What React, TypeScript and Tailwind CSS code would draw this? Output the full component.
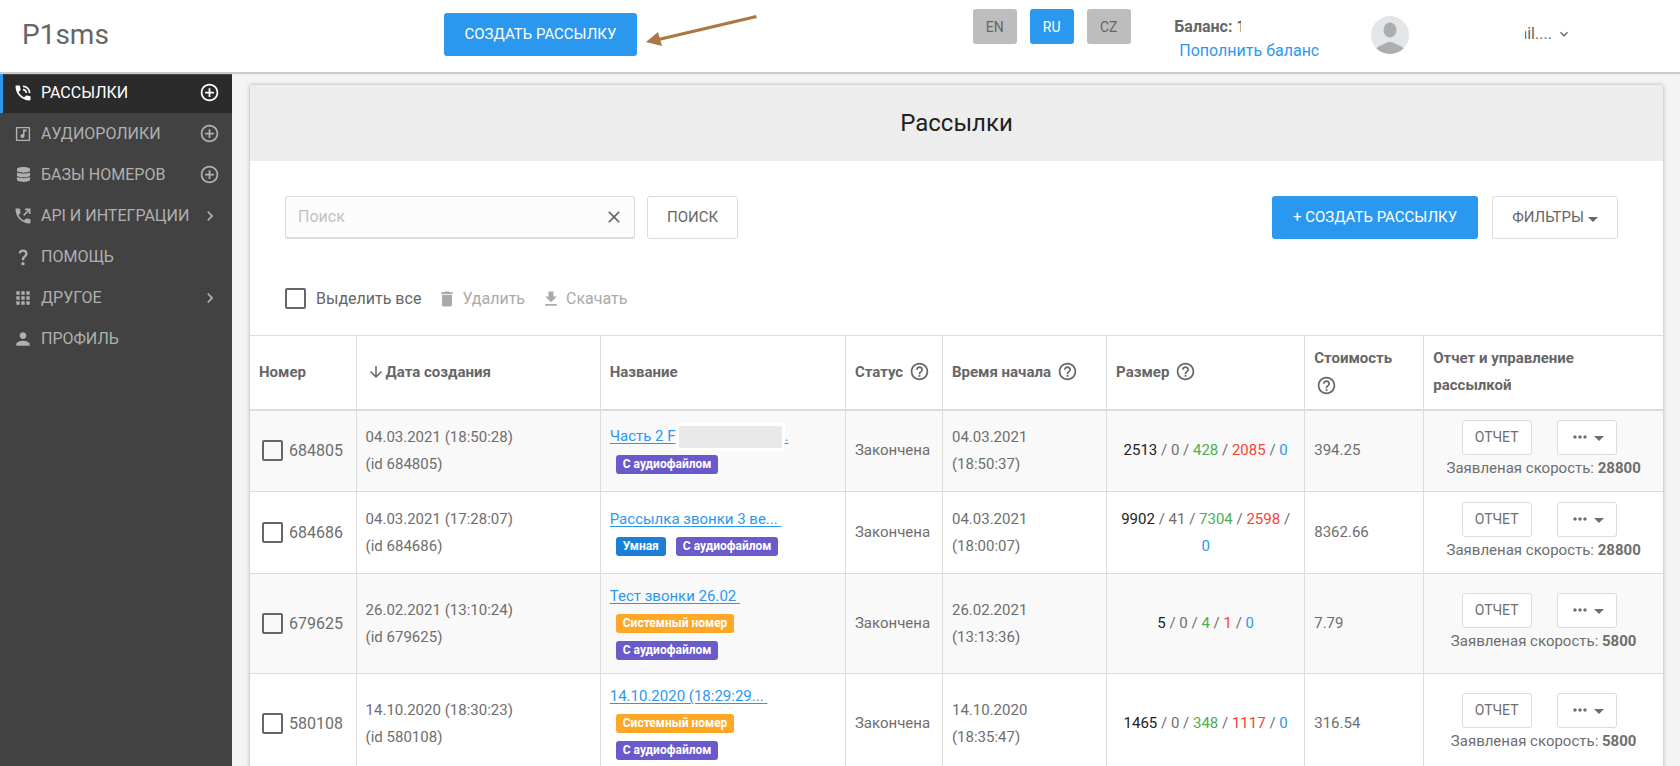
import { ReactNode } from "react"
import { FaDatabase } from "react-icons/fa"
import {
  MdAddCircleOutline,
  MdApps,
  MdArrowDownward,
  MdChevronRight,
  MdClose,
  MdDelete,
  MdExpandMore,
  MdFileDownload,
  MdHelpOutline,
  MdMoreHoriz,
  MdPerson,
  MdPhoneInTalk,
  MdQuestionMark,
} from "react-icons/md"

type Tag = "smart" | "audio" | "system"

type Mailing = {
  id: string
  created: string
  createdTime: string
  name: string
  hidden?: boolean
  tags: Tag[]
  start: string
  startTime: string
  size: string[]
  price: string
  speed: string
}

const tagInfo = {
  smart: { label: "Умная", color: "bg-[#1c7fd6]" },
  audio: { label: "С аудиофайлом", color: "bg-[#6a5bcb]" },
  system: { label: "Системный номер", color: "bg-[#ffa726]" },
}

const mailings: Mailing[] = [
  {
    id: "684805",
    created: "04.03.2021",
    createdTime: "18:50:28",
    name: "Часть 2 F",
    hidden: true,
    tags: ["audio"],
    start: "04.03.2021",
    startTime: "18:50:37",
    size: ["2513", "0", "428", "2085", "0"],
    price: "394.25",
    speed: "28800",
  },
  {
    id: "684686",
    created: "04.03.2021",
    createdTime: "17:28:07",
    name: "Рассылка звонки 3 ве...",
    tags: ["smart", "audio"],
    start: "04.03.2021",
    startTime: "18:00:07",
    size: ["9902", "41", "7304", "2598", "0"],
    price: "8362.66",
    speed: "28800",
  },
  {
    id: "679625",
    created: "26.02.2021",
    createdTime: "13:10:24",
    name: "Тест звонки 26.02",
    tags: ["system", "audio"],
    start: "26.02.2021",
    startTime: "13:13:36",
    size: ["5", "0", "4", "1", "0"],
    price: "7.79",
    speed: "5800",
  },
  {
    id: "580108",
    created: "14.10.2020",
    createdTime: "18:30:23",
    name: "14.10.2020 (18:29:29...",
    tags: ["system", "audio"],
    start: "14.10.2020",
    startTime: "18:35:47",
    size: ["1465", "0", "348", "1117", "0"],
    price: "316.54",
    speed: "5800",
  },
]

const sizeColors = ["text-[#212121]", "", "text-[#4caf50]", "text-[#f44336]", "text-[#2b98f0]"]

function MusicIcon() {
  return (
    <svg viewBox="0 0 18 18" className="size-4" fill="currentColor">
      <path d="M2 1h14a1 1 0 0 1 1 1v14a1 1 0 0 1-1 1H2a1 1 0 0 1-1-1V2a1 1 0 0 1 1-1zm.6 1.600v12.800h12.800V2.600z" fillRule="evenodd" />
      <path d="M9 4h4v2.300h-2.300v5a2.300 2.300 0 1 1-1.700-2.200z" />
    </svg>
  )
}

function CallOutIcon() {
  return (
    <svg viewBox="0 0 24 24" className="size-5" fill="currentColor">
      <path d="M20 15.500c-1.250 0-2.450-.2-3.570-.57-.35-.11-.74-.03-1.020.24l-2.200 2.200c-2.830-1.440-5.150-3.750-6.590-6.580l2.200-2.210c.28-.27.36-.66.25-1.010C8.700 6.450 8.500 5.250 8.500 4c0-.55-.45-1-1-1H4c-.55 0-1 .45-1 1 0 9.390 7.610 17 17 17 .55 0 1-.45 1-1v-3.500c0-.55-.45-1-1-1z" />
      <path d="M14.500 3H21v6.500h-2V6.400l-5.600 5.600L12 10.600 17.600 5h-3.100z" />
    </svg>
  )
}

function Caret() {
  return (
    <svg viewBox="0 0 10 5" className="mt-[3px] h-[5px] w-[10px]" fill="currentColor">
      <path d="M0 0h10L5 5z" />
    </svg>
  )
}

type NavItem = { label: string; icon: ReactNode; end?: "add" | "more"; active?: boolean }

const nav: NavItem[] = [
  { label: "РАССЫЛКИ", icon: <MdPhoneInTalk className="size-5" />, end: "add", active: true },
  { label: "АУДИОРОЛИКИ", icon: <MusicIcon />, end: "add" },
  { label: "БАЗЫ НОМЕРОВ", icon: <FaDatabase className="size-[15px]" />, end: "add" },
  { label: "API И ИНТЕГРАЦИИ", icon: <CallOutIcon />, end: "more" },
  { label: "ПОМОЩЬ", icon: <MdQuestionMark className="size-5" /> },
  { label: "ДРУГОЕ", icon: <MdApps className="size-5" />, end: "more" },
  { label: "ПРОФИЛЬ", icon: <MdPerson className="size-5" /> },
]

function Sidebar() {
  return (
    <nav className="w-58 shrink-0 bg-[#424242] text-base">
      {nav.map((item) => (
        <div
          key={item.label}
          className={
            item.active
              ? "flex h-[41px] items-center border-l-3 border-[#2b98f0] bg-[#2b2b2b] pr-3 pl-[10px] text-white"
              : "flex h-[41px] items-center border-l-3 border-transparent pr-3 pl-[10px] text-[#b0b0b0]"
          }
        >
          <a href="#" className="flex flex-1 items-center gap-2 whitespace-nowrap">
            <span className="flex w-5 justify-center">{item.icon}</span>
            {item.label}
          </a>
          {item.end === "add" && (
            <button type="button" aria-label="Добавить">
              <MdAddCircleOutline className="size-[21px]" />
            </button>
          )}
          {item.end === "more" && <MdChevronRight className="size-5" />}
        </div>
      ))}
    </nav>
  )
}

function Header() {
  return (
    <header className="z-10 flex h-[72px] shrink-0 bg-white shadow-[0_1px_1px_1px_#cacaca]">
      <div className="w-[26.4%] pt-[17px] pl-[22px] text-[28px] leading-9">P1sms</div>

      <div className="flex w-[31.500%] items-start pt-[13px]">
        <button type="button" className="h-[43px] rounded-[3px] bg-[#2b98f0] px-[21px] text-white">
          СОЗДАТЬ РАССЫЛКУ
        </button>
        <svg viewBox="0 0 112 34" className="ml-[9px] h-[34px] w-28" fill="#a97a46">
          <path d="M110 2l1 3-98 23-1-3z" />
          <path d="M0 29l12-10 4 14z" />
        </svg>
      </div>

      <div className="flex w-[12%] gap-[13px] pt-[9px]">
        <button type="button" className="h-[35px] w-11 rounded-[3px] bg-[#bdbdbd] text-sm">EN</button>
        <button type="button" className="h-[35px] w-11 rounded-[3px] bg-[#2b98f0] text-sm text-white">RU</button>
        <button type="button" className="h-[35px] w-11 rounded-[3px] bg-[#bdbdbd] text-sm">CZ</button>
      </div>

      <div className="w-[11.700%] pt-[15px] text-base leading-6">
        <div className="flex font-bold whitespace-pre">
          Баланс: <span className="w-[5px] overflow-hidden">1</span>
        </div>
        <a href="#" className="ml-[5px] text-[#2b98f0]">Пополнить баланс</a>
      </div>

      <svg viewBox="0 0 38 38" className="mt-4 size-[38px]">
        <clipPath id="avatar">
          <circle cx="19" cy="19" r="19" />
        </clipPath>
        <g clipPath="url(#avatar)">
          <rect width="38" height="38" fill="#e3e5e7" />
          <ellipse cx="19" cy="14" rx="6.500" ry="7.500" fill="#abaeb1" />
          <path d="M5 33c2-3 7-4 9-5.500 3-2 7-2 10 0 2 1.500 7 2.500 9 5.500v6H5z" fill="#abaeb1" />
        </g>
      </svg>

      <button type="button" className="ml-29 flex h-9 items-center self-start pt-8">
        <span className="flex w-[27px] justify-end overflow-hidden text-base">ail....</span>
        <MdExpandMore className="ml-1 size-4" />
      </button>
    </header>
  )
}

function Toolbar() {
  return (
    <div className="px-[35px] pt-[35px]">
      <div className="flex items-center pr-[10px]">
        <div className="flex h-[43px] w-[350px] items-center rounded-[3px] border border-b-2 border-[#dcdcdc] bg-[#fcfcfc]">
          <input
            type="text"
            aria-label="Поиск"
            placeholder="Поиск"
            className="min-w-0 flex-1 pl-3 text-base outline-none placeholder:text-[#c2c2c2]"
          />
          <button type="button" aria-label="Очистить" className="mr-[10px]">
            <MdClose className="size-5" />
          </button>
        </div>
        <button type="button" className="ml-3 h-[43px] rounded-[3px] border border-[#dcdcdc] px-[19px]">
          ПОИСК
        </button>
        <button type="button" className="ml-auto h-[43px] rounded-[3px] bg-[#2b98f0] px-[21px] text-white">
          + СОЗДАТЬ РАССЫЛКУ
        </button>
        <button type="button" className="ml-[14px] flex h-[43px] items-center gap-1 rounded-[3px] border border-[#dcdcdc] px-[19px]">
          ФИЛЬТРЫ <Caret />
        </button>
      </div>

      <div className="mt-8 flex h-[64px] items-center pb-[9px] text-base">
        <label className="flex items-center gap-[10px]">
          <input type="checkbox" className="size-[21px] appearance-none rounded-[2px] border-2 border-[#666]" />
          Выделить все
        </label>
        <button type="button" className="ml-4 flex items-center gap-[5px] text-[#aaa]">
          <MdDelete className="size-5" /> Удалить
        </button>
        <button type="button" className="ml-4 flex items-center gap-[5px] text-[#aaa]">
          <MdFileDownload className="size-5" /> Скачать
        </button>
      </div>
    </div>
  )
}

function Help() {
  return <MdHelpOutline className="mb-[2px] ml-[2px] inline size-[21px]" />
}

function Row({ item }: { item: Mailing }) {
  return (
    <tr className="h-[82px] border-t border-[#dcdcdc] text-[#6e6e6e] odd:bg-[#f9f9f9]">
      <td className="pl-3">
        <label className="flex items-center gap-[6px] text-base">
          <input type="checkbox" className="size-[21px] appearance-none rounded-[2px] border-2 border-[#666]" />
          {item.id}
        </label>
      </td>
      <td className="border-l border-[#dcdcdc] px-[9px]">
        {item.created} ({item.createdTime})
        <br />
        (id {item.id})
      </td>
      <td className="border-l border-[#dcdcdc] px-[9px] py-[9px]">
        <div className="flex h-[27px] items-center whitespace-pre">
          <a href="#" className="text-[#2b98f0] underline underline-offset-2">
            {item.name}
            {item.hidden ? (
              <>
                <span className="inline-block h-[28px] w-[109px] border-3 border-white bg-[#e9e9e9] align-middle" />.
              </>
            ) : (
              " "
            )}
          </a>
        </div>
        <div className="flex flex-wrap gap-x-[10px] pl-[6px]">
          {item.tags.map((tag) => (
            <span key={tag} className="flex h-[27px] items-center">
              <span className={`${tagInfo[tag].color} rounded-[3px] px-[7px] text-[12px] leading-[19px] font-bold text-white`}>
                {tagInfo[tag].label}
              </span>
            </span>
          ))}
        </div>
      </td>
      <td className="border-l border-[#dcdcdc] px-[9px]">Закончена</td>
      <td className="border-l border-[#dcdcdc] px-[9px]">
        {item.start}
        <br />({item.startTime})
      </td>
      <td className="border-l border-[#dcdcdc] px-[9px] text-center">
        {item.size.map((n, i) => (
          <span key={i}>
            {i > 0 && " / "}
            <span className={sizeColors[i]}>{n}</span>
          </span>
        ))}
      </td>
      <td className="border-l border-[#dcdcdc] px-[9px]">{item.price}</td>
      <td className="border-l border-[#dcdcdc] text-center">
        <div className="flex justify-center gap-[25px] pr-[9px]">
          <button type="button" className="h-[35px] w-[70px] rounded-[3px] border border-[#dcdcdc] bg-white text-sm">
            ОТЧЕТ
          </button>
          <button
            type="button"
            aria-label="Действия"
            className="flex h-[35px] w-[60px] items-center justify-center gap-1 rounded-[3px] border border-[#dcdcdc] bg-white"
          >
            <MdMoreHoriz className="size-5" />
            <Caret />
          </button>
        </div>
        Заявленая скорость: <b>{item.speed}</b>
      </td>
    </tr>
  )
}

function MailingTable() {
  return (
    <table className="w-full table-fixed border-collapse border-t border-[#dcdcdc] text-left leading-[27px]">
      <thead>
        <tr className="h-[74px] border-b-2 border-[#dcdcdc]">
          <th className="w-[106px] px-[9px]">Номер</th>
          <th className="w-[244px] border-l border-[#dcdcdc] px-[9px]">
            <MdArrowDownward className="mr-px mb-[2px] ml-[1px] inline size-[18px]" />
            Дата создания
          </th>
          <th className="w-[245px] border-l border-[#dcdcdc] px-[9px]">Название</th>
          <th className="w-[97px] border-l border-[#dcdcdc] pl-[9px] whitespace-nowrap">
            Статус <Help />
          </th>
          <th className="w-[164px] border-l border-[#dcdcdc] pl-[9px] whitespace-nowrap">
            Время начала <Help />
          </th>
          <th className="w-[198px] border-l border-[#dcdcdc] px-[9px]">
            Размер <Help />
          </th>
          <th className="w-[119px] border-l border-[#dcdcdc] px-[9px]">
            Стоимость <Help />
          </th>
          <th className="w-[239px] border-l border-[#dcdcdc] px-[9px]">Отчет и управление рассылкой</th>
        </tr>
      </thead>
      <tbody>
        {mailings.map((item) => (
          <Row key={item.id} item={item} />
        ))}
      </tbody>
    </table>
  )
}

export default function App() {
  return (
    <div className="flex h-screen flex-col overflow-hidden bg-[#f4f4f4] font-[Roboto,sans-serif] text-[15px] text-[#666]">
      <Header />

      <div className="flex min-h-0 flex-1">
        <Sidebar />

        <main className="min-w-0 flex-1 overflow-hidden pt-[13px] pr-[17px] pl-[18px]">
          <section className="bg-white shadow-[0_0_4px_rgba(0,0,0,0.3)]">
            <h1 className="bg-[#ededed] py-[22px] text-center text-2xl text-[#212121]">Рассылки</h1>
            <Toolbar />
            <MailingTable />
          </section>
        </main>
      </div>
    </div>
  )
}
